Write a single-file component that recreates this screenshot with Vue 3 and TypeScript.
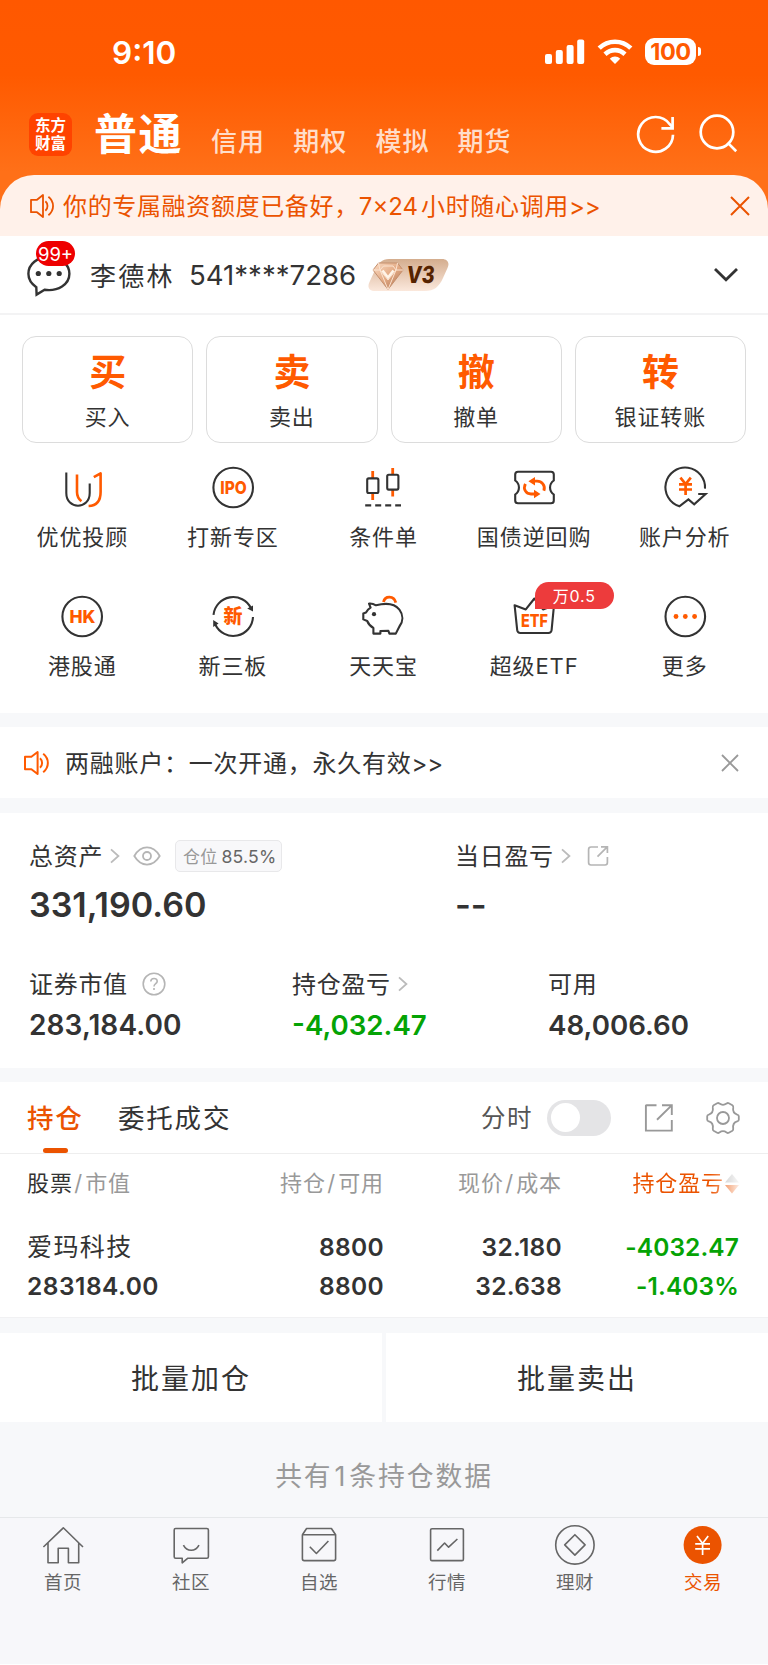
<script setup lang="ts">
interface Action { glyph: string; label: string }
interface Shortcut { icon: string; label: string; badge?: string }
interface NavItem { icon: string; label: string; active?: boolean }

const markets: string[] = ['信用', '期权', '模拟', '期货']

const actions: Action[] = [
  { glyph: '买', label: '买入' },
  { glyph: '卖', label: '卖出' },
  { glyph: '撤', label: '撤单' },
  { glyph: '转', label: '银证转账' },
]

const shortcuts: Shortcut[] = [
  { icon: 'advisor', label: '优优投顾' },
  { icon: 'ipo', label: '打新专区' },
  { icon: 'candles', label: '条件单' },
  { icon: 'bond', label: '国债逆回购' },
  { icon: 'analysis', label: '账户分析' },
  { icon: 'hk', label: '港股通' },
  { icon: 'board', label: '新三板' },
  { icon: 'piggy', label: '天天宝' },
  { icon: 'etf', label: '超级ETF', badge: '万0.5' },
  { icon: 'more', label: '更多' },
]

const navItems: NavItem[] = [
  { icon: 'home', label: '首页' },
  { icon: 'community', label: '社区' },
  { icon: 'watchlist', label: '自选' },
  { icon: 'quotes', label: '行情' },
  { icon: 'wealth', label: '理财' },
  { icon: 'trade', label: '交易', active: true },
]
</script>

<template>
  <div class="page">
    <header class="hero">
      <div class="status">
        <span class="time">9:10</span>
        <svg class="signal" width="40" height="26" viewBox="0 0 40 26" fill="#fff">
          <rect x="0" y="15" width="7" height="10" rx="2" />
          <rect x="10.8" y="11" width="7" height="14" rx="2" />
          <rect x="21.6" y="6" width="7" height="19" rx="2" />
          <rect x="32.2" y="0.5" width="7" height="24.5" rx="2" />
        </svg>
        <svg class="wifi" width="36" height="26" viewBox="0 0 36 26" fill="none" stroke="#fff" stroke-width="4.6">
          <path d="M2.2 9.2C11 0.6 25 0.6 33.8 9.2" />
          <path d="M8 15.2C13.8 9.8 22.2 9.8 28 15.2" />
          <path d="M12.8 19.8C15.8 16.8 20.2 16.8 23.2 19.8L18 25Z" fill="#fff" stroke="none" />
        </svg>
        <span class="battery">100</span>
        <span class="battery-tip"></span>
      </div>
      <div class="markets">
        <div class="logo">东方<br>财富</div>
        <h1>普通</h1>
        <nav class="market-tabs"><span v-for="m in markets" :key="m">{{ m }}</span></nav>
        <svg class="refresh" width="40" height="40" viewBox="0 0 40 40" fill="none" stroke="#fff" stroke-width="2.7">
          <path d="M37 20.7A17.4 17.4 0 1 1 33.7 10.2L36.4 13" />
          <path d="M36.6 3v11.3H25.4" />
        </svg>
        <svg class="search" width="40" height="40" viewBox="0 0 40 40" fill="none" stroke="#fff" stroke-width="2.7">
          <circle cx="18" cy="18" r="16.3" /><path d="M28.6 28.6l8.6 8.6" />
        </svg>
      </div>
    </header>

    <section class="promo">
      <svg width="26" height="26" viewBox="0 0 26 26" fill="none" stroke="#eb5300" stroke-width="1.8">
        <path d="M2 6.8h6L14 2v22l-6-4.8H2Z" stroke-linejoin="round" />
        <path d="M16.4 8.2c2.8 2.4 2.8 7.2 0 9.6M19.4 3.8c6.2 5 6.2 13.4 0 18.4" />
      </svg>
      <p>你的专属融资额度已备好，<span class="num">7×24</span>小时随心调用<span class="arrows">&gt;&gt;</span></p>
      <svg class="close" width="20" height="20" viewBox="0 0 20 20" fill="none" stroke="#eb5300" stroke-width="2">
        <path d="M1 1l18 18M19 1L1 19" />
      </svg>
    </section>

    <section class="account">
      <div class="chat">
        <svg width="44" height="44" viewBox="0 0 44 44" fill="none" stroke="#333" stroke-width="2.4">
          <path d="M9.3 34.2C4.4 30.8 1.4 26.2 1.4 20.8C1.4 11 10.4 4 21.8 4S42.4 11 42.4 20.8C42.4 31.6 31 38.6 17.6 36.8L9.6 41.6Z" />
          <g fill="#333" stroke="none"><circle cx="11.3" cy="20.5" r="2.6" /><circle cx="21.8" cy="20.5" r="2.6" /><circle cx="32.2" cy="20.5" r="2.6" /></g>
        </svg>
        <span class="unread">99+</span>
      </div>
      <span class="name">李德林</span>
      <span class="acct">541****7286</span>
      <svg class="vip" width="82" height="34" viewBox="0 0 82 34">
        <defs>
          <linearGradient id="vipBg" x1="0" y1="0" x2="0" y2="1"><stop offset="0" stop-color="#d4ad8e" /><stop offset="1" stop-color="#fbe8dc" /></linearGradient>
          <linearGradient id="gem" x1="0" y1="0" x2="1" y2="1"><stop offset="0" stop-color="#fbdcc4" /><stop offset=".5" stop-color="#e3aa84" /><stop offset="1" stop-color="#a96f50" /></linearGradient>
        </defs>
        <path d="M21 1H74C79.5 1 82 5 79.5 10L75 20C71 29 66 33 57 33H7C1 33-1 29 1.5 24L7 12C10 5 14 1 21 1Z" fill="url(#vipBg)" />
        <path d="M10.5 5H29.5L35 12L20 31.5L5 12Z" fill="url(#gem)" stroke="#c48f6d" stroke-width="1" />
        <path d="M5 12H12L15.5 8H25L28 12H35M12 12L20 22L28 12M10.5 5L12 12L20 31.5L28 12L29.5 5" fill="none" stroke="#fbe3d0" stroke-width="1" />
        <path d="M14.5 12.5L20 19.5L25.5 12.5" fill="none" stroke="#fff4e8" stroke-width="2.6" />
        <text transform="translate(38 25.3) skewX(-6)" x="0" y="0" font-family="Inter" font-size="23.5" font-weight="800" fill="#562300" textLength="28" lengthAdjust="spacingAndGlyphs">V3</text>
      </svg>
      <svg class="expand" width="26" height="16" viewBox="0 0 26 16" fill="none" stroke="#333" stroke-width="2.8"><path d="M2 2l11 10.8L24 2" /></svg>
    </section>

    <section class="actions">
      <button v-for="a in actions" :key="a.label" type="button"><b>{{ a.glyph }}</b><span>{{ a.label }}</span></button>
    </section>

    <section class="shortcuts">
      <div v-for="s in shortcuts" :key="s.label" class="shortcut">
        <svg width="48" height="48" viewBox="0 0 48 48" fill="none" stroke="#333" stroke-width="2.1">
          <template v-if="s.icon === 'advisor'">
            <path d="M8.3 9.5V30C8.3 47 31.7 47 31.7 30V20.5" />
            <path d="M19 11.5V29C19 33.5 20.6 36 23.4 38.2M35.8 14.2L42.6 10.4V29C42.6 38 38.5 42.7 30.6 43" stroke="#ff5a00" stroke-width="2.6" stroke-linejoin="round" />
          </template>
          <template v-else-if="s.icon === 'ipo'">
            <circle cx="24.2" cy="24.5" r="19.8" />
            <text class="word" x="11.3" y="30.9" font-size="17.6" textLength="26.5" lengthAdjust="spacingAndGlyphs">IPO</text>
          </template>
          <template v-else-if="s.icon === 'candles'">
            <path d="M13.7 8v7M13.7 30v7M33.7 5v7M33.7 26v7.5" stroke="#ff5a00" stroke-width="2.8" />
            <rect x="8.2" y="15.4" width="11.2" height="14.6" rx="1.5" /><rect x="28.2" y="11.8" width="11.2" height="14.8" rx="1.5" />
            <path d="M6.2 42.4H42" stroke-dasharray="6 4" />
          </template>
          <template v-else-if="s.icon === 'bond'">
            <path d="M8 8.8H41Q43.8 8.8 43.8 11.6V17.5C38.8 21 38.8 28 43.8 31.5V37.4Q43.8 40.2 41 40.2H8Q5.2 40.2 5.2 37.4V31.5C10.2 28 10.2 21 5.2 17.5V11.6Q5.2 8.8 8 8.8Z" />
            <path d="M22 18.2H27C31.5 18.2 35.8 22 33.9 27.8M15.4 20.8C12.8 26 16 31 21 31H26" stroke="#ff5a00" stroke-width="2.8" />
            <path d="M18.4 18.2L25 14V22.4ZM30.5 31L24 26.8V35.2Z" fill="#ff5a00" stroke="none" />
          </template>
          <template v-else-if="s.icon === 'analysis'">
            <path d="M44 25.6A19.8 19.8 0 1 0 18.4 43.3L27.4 36.4L33.2 41.4L44.6 31H37.2" />
            <path d="M19.4 14.6L24.6 21L29.8 14.6M18 21.4H31M18 26.5H31M24.6 21V32" stroke="#ff5a00" stroke-width="2.7" />
          </template>
          <template v-else-if="s.icon === 'hk'">
            <circle cx="24.2" cy="24.5" r="19.8" />
            <text class="word" x="11.4" y="31" font-size="17.6" textLength="26" lengthAdjust="spacingAndGlyphs">HK</text>
          </template>
          <template v-else-if="s.icon === 'board'">
            <path d="M4.5 22.8A19.8 19.8 0 0 1 42 16.2M44 25A19.8 19.8 0 0 1 6.4 32.8" />
            <path d="M38.2 16.6L44 13.6V19.6ZM4.2 35V28L9.6 31.6Z" fill="#333" stroke="none" />
            <text class="word" x="14.6" y="31.3" font-size="19">新</text>
          </template>
          <template v-else-if="s.icon === 'piggy'">
            <path d="M24.5 10C26 3.4 35 3.4 36.8 10.6" stroke="#ff5a00" stroke-width="2.8" />
            <path d="M10 11.6Q13.5 11.2 17 13.3C28 10.4 36 12 40.4 17.6C44.5 23 44.2 29.5 40.4 34.5L36.8 41.6H30.4L29.4 38.8L21.4 39V41.6H14.4V36C11 34 9.4 32 8.2 29L4.3 27.4V21.6L7 20.6C8.4 18 9.6 16.6 11.6 15.6Z" stroke-linejoin="round" />
            <circle cx="15" cy="22.2" r="2.1" fill="#333" stroke="none" />
          </template>
          <template v-else-if="s.icon === 'etf'">
            <path d="M4.6 13.2L15.8 17.4L24.4 6.5L33 17.4L44 13.2L41.6 38.2Q41.2 41 38.4 41H10.4Q7.6 41 7.2 38.2Z" stroke-linejoin="round" />
            <text class="word" x="11" y="35.2" font-size="18" textLength="27" lengthAdjust="spacingAndGlyphs">ETF</text>
          </template>
          <template v-else>
            <circle cx="24.3" cy="24.5" r="19.8" />
            <g fill="#ff5a00" stroke="none"><circle cx="15" cy="24.5" r="2.4" /><circle cx="24.3" cy="24.5" r="2.4" /><circle cx="33.6" cy="24.5" r="2.4" /></g>
          </template>
        </svg>
        <span class="caption">{{ s.label }}</span>
        <span v-if="s.badge" class="badge">{{ s.badge }}</span>
      </div>
    </section>

    <section class="notice">
      <svg width="27" height="26" viewBox="0 0 27 26" fill="none" stroke="#ff5a00" stroke-width="2">
        <path d="M2 6.8h6.4L14.6 2v22l-6.2-4.8H2Z" stroke-linejoin="round" />
        <path d="M17 8.2c2.8 2.4 2.8 7.2 0 9.6M20.2 3.8c6.2 5 6.2 13.4 0 18.4" />
      </svg>
      <p>两融账户：一次开通，永久有效<span class="arrows">&gt;&gt;</span></p>
      <svg class="close" width="18" height="18" viewBox="0 0 18 18" fill="none" stroke="#999" stroke-width="1.8">
        <path d="M1 1l16 16M17 1L1 17" />
      </svg>
    </section>

    <section class="assets">
      <div class="totals">
        <div>
          <div class="label">
            <span>总资产</span>
            <svg class="chev" width="10" height="16" viewBox="0 0 10 16"><path d="M1 1.4L8.4 8L1 14.6" /></svg>
            <svg class="eye" width="28" height="20" viewBox="0 0 28 20" fill="none" stroke="#b5b5b5" stroke-width="1.8">
              <path d="M1.3 10C8 -1.4 20 -1.4 26.7 10C20 21.4 8 21.4 1.3 10Z" /><circle cx="14" cy="10" r="4" />
            </svg>
            <span class="tag"><i>仓位</i>85.5%</span>
          </div>
          <strong>331,190.60</strong>
        </div>
        <div>
          <div class="label">
            <span>当日盈亏</span>
            <svg class="chev" width="10" height="16" viewBox="0 0 10 16"><path d="M1 1.4L8.4 8L1 14.6" /></svg>
            <svg class="share" width="22" height="22" viewBox="0 0 22 22" fill="none" stroke="#b5b5b5" stroke-width="1.7">
              <path d="M11 2H4Q1.6 2 1.6 4.4V17.6Q1.6 20 4 20H18Q20.4 20 20.4 17.6V12M14 1.9H20.4V8M20 2.2L10.5 11.7" />
            </svg>
          </div>
          <strong>--</strong>
        </div>
      </div>
      <div class="details">
        <div>
          <div class="label">
            <span>证券市值</span>
            <svg class="help" width="24" height="24" viewBox="0 0 24 24" fill="none" stroke="#b5b5b5" stroke-width="1.6">
              <circle cx="12" cy="12" r="10.8" />
              <path d="M8.8 9.6C8.8 5.4 15.4 5.6 15.2 9.4C15.1 11.6 12 11.8 12 14.4M12 16v2" />
            </svg>
          </div>
          <strong class="market-value">283,184.00</strong>
        </div>
        <div>
          <div class="label">
            <span>持仓盈亏</span>
            <svg class="chev" width="10" height="16" viewBox="0 0 10 16"><path d="M1 1.4L8.4 8L1 14.6" /></svg>
          </div>
          <strong class="down">-4,032.47</strong>
        </div>
        <div>
          <div class="label"><span>可用</span></div>
          <strong>48,006.60</strong>
        </div>
      </div>
    </section>

    <section class="tabs">
      <span class="tab active">持仓</span>
      <span class="tab">委托成交</span>
      <span class="minute">分时</span>
      <span class="toggle"></span>
      <svg class="open" width="30" height="30" viewBox="0 0 30 30" fill="none" stroke="#999" stroke-width="1.9">
        <path d="M12.5 2.3H2.5Q1.9 2.3 1.9 3V27.6H27.8V17M18 2.3H27.8V12M27.4 2.6L13 16.8" />
      </svg>
      <svg class="gear" width="34" height="34" viewBox="0 0 34 34" fill="none" stroke="#999" stroke-width="1.8" stroke-linejoin="round">
        <path d="M11.2 2.2Q12.4 1.6 13.4 2.6Q17 5.2 20.6 2.6Q21.6 1.6 22.8 2.2L26.4 4.2Q27.4 4.8 27.2 6.4C26.6 10.4 28.4 12.8 31.2 13.6Q32.8 14 32.8 15.2V18.8Q32.8 20 31.2 20.4C28.4 21.2 26.6 23.6 27.2 27.6Q27.4 29.2 26.4 29.8L22.8 31.8Q21.6 32.4 20.6 31.4Q17 28.8 13.4 31.4Q12.4 32.4 11.2 31.8L7.6 29.8Q6.6 29.2 6.8 27.6C7.4 23.6 5.6 21.2 2.8 20.4Q1.2 20 1.2 18.8V15.2Q1.2 14 2.8 13.6C5.6 12.8 7.4 10.4 6.8 6.4Q6.6 4.8 7.6 4.2Z" />
        <circle cx="17" cy="17" r="6" />
      </svg>
    </section>

    <section class="holdings">
      <div class="grid head">
        <span><em>股票</em><i>/</i>市值</span>
        <span>持仓<i>/</i>可用</span>
        <span>现价<i>/</i>成本</span>
        <span class="sort">持仓盈亏<svg width="14" height="20" viewBox="0 0 14 20"><path d="M7 0L14 8.4H0Z" fill="#b8b8b8" /><path d="M7 19.6L14 11H0Z" fill="#eb5300" /></svg></span>
      </div>
      <div class="grid row">
        <span class="stock">爱玛科技</span><b>8800</b><b>32.180</b><b class="down">-4032.47</b>
      </div>
      <div class="grid row">
        <b>283184.00</b><b>8800</b><b>32.638</b><b class="down">-1.403%</b>
      </div>
    </section>

    <section class="batch">
      <button type="button">批量加仓</button>
      <button type="button">批量卖出</button>
    </section>

    <p class="summary">共有<span>1</span>条持仓数据</p>

    <footer class="nav">
      <div v-for="n in navItems" :key="n.label" class="nav-item" :class="{ active: n.active }">
        <svg width="44" height="44" viewBox="0 0 44 44" fill="none" stroke="#666" stroke-width="1.6" stroke-linejoin="round">
          <path v-if="n.icon === 'home'" d="M2.4 24L22.3 4.8L42 24M7 20V39.8H17.2V25.3H27.4V39.8H37.7V20" />
          <path v-else-if="n.icon === 'community'" d="M6.6 5.5H37.8Q39.4 5.5 39.4 7.1V33.7Q39.4 35.3 37.8 35.3H18.6L13.2 39.8V35.3H6.6Q5.2 35.3 5.2 33.7V7.1Q5.2 5.5 6.6 5.5ZM14.4 22.2C18 29 26.4 29 30 22.2" />
          <path v-else-if="n.icon === 'watchlist'" d="M5.4 11.8L9.6 5.5H34.4L38.6 11.8V35.8Q38.6 37.6 36.8 37.6H7.2Q5.4 37.6 5.4 35.8V11.8H38.6M12.8 23.8L19.4 30.5L31.4 18" />
          <path v-else-if="n.icon === 'quotes'" d="M7 5.7H37Q38.4 5.7 38.4 7.1V36.2Q38.4 37.6 37 37.6H7Q5.6 37.6 5.6 36.2V7.1Q5.6 5.7 7 5.7ZM12.3 27.6L19.6 20L23.6 24.2L32.4 16" />
          <template v-else-if="n.icon === 'wealth'"><circle cx="21.9" cy="21.9" r="19.2" /><path d="M21.9 11.7L32.1 21.9L21.9 32.1L11.7 21.9Z" /></template>
          <template v-else><circle cx="21.6" cy="22" r="19" fill="#eb5300" stroke="none" /><path d="M16 13L21.6 20.6L27.2 13M14.2 20.8H29M14.2 25.8H29M21.6 20.6V32" stroke="#fff" stroke-width="1.7" /></template>
        </svg>
        <span>{{ n.label }}</span>
      </div>
    </footer>
  </div>
</template>

<style>
html, body { margin: 0; background: #fff; }
</style>

<style scoped>
.page {
  width: 768px;
  height: 1664px;
  display: flex;
  flex-direction: column;
  background: #f7f8fa;
  color: #333;
  font-family: Inter, "Noto Sans CJK SC", sans-serif;
  overflow: hidden;
}
.page * { box-sizing: border-box; }
p, h1 { margin: 0; }
svg { display: block; flex: none; }
section, .summary, .nav, .hero { flex: none; white-space: nowrap; }
button { appearance: none; border: 0; padding: 0; background: #fff; color: inherit; font: inherit; }

.hero {
  height: 220px;
  margin-bottom: -45px;
  background: linear-gradient(#ff5800 0, #ff5a00 75px, #ff7018 172px, #ff7018 100%);
  color: #fff;
}
.status { display: flex; align-items: center; height: 103px; padding-left: 112px; }
.time { width: 433px; font-size: 31.5px; font-weight: 600; line-height: 40px; padding-top: 2px; }
.wifi { margin-left: 12px; }
.battery {
  width: 51px; height: 27px; margin-left: 12px;
  border-radius: 9px; background: #fff; color: #ff5a00;
  font-size: 23.5px; font-weight: 700; line-height: 27px; text-align: center; letter-spacing: -0.4px;
}
.battery-tip { width: 3px; height: 9px; margin-left: 2px; border-radius: 0 5px 5px 0; background: #fff; }
.markets { display: flex; height: 64px; padding: 10px 0 0 29px; }
.logo {
  width: 43px; height: 43px; padding-top: 3px; border-radius: 9px; background: #ff4300; text-align: center;
  font-family: "Noto Sans CJK SC", sans-serif; font-size: 15.5px; font-weight: 700; line-height: 17.8px;
}
h1 { width: 115px; margin-left: 22px; font-size: 43px; font-weight: 600; letter-spacing: 1.4px; line-height: 42px; }
.market-tabs { display: flex; gap: 28.2px; width: 427px; padding-left: 2px; color: rgba(255, 255, 255, .8); font-size: 26px; font-weight: 500; letter-spacing: 1px; line-height: 57px; }
.refresh { margin-top: 1px; }
.search { margin: 1px 0 0 23px; }

.promo {
  display: flex; align-items: center; height: 61px; padding: 0 18px 0 29px;
  background: #fff1ea; border-radius: 34px 34px 0 0; color: #eb5300;
}
.promo p { flex: 1; margin-left: 8px; padding-bottom: 2px; font-size: 24px; letter-spacing: .65px; }
.num { margin-right: 3px; letter-spacing: 0; }
.arrows { letter-spacing: -.2px; }

.account { display: flex; align-items: center; height: 79px; padding: 0 29px 0 27px; background: #fff; border-bottom: 2px solid #f3f3f4; }
.chat { position: relative; width: 44px; height: 44px; }
.unread {
  position: absolute; left: 9px; top: -12px; width: 39px; height: 25px; border-radius: 13px;
  background: #e00; color: #fff; font-size: 18.5px; line-height: 26px; text-align: center;
}
.name { width: 99px; margin-left: 19px; padding-bottom: 1px; font-size: 26px; letter-spacing: 2.2px; }
.acct { width: 179px; font-size: 27.6px; }
.vip { flex: none; }
.expand { margin-left: auto; }

.actions { display: grid; grid-template-columns: repeat(4, 1fr); gap: 13px; height: 128px; padding: 21px 22px 0; background: #fff; }
.actions button { height: 107px; border: 1px solid #dcdcdc; border-radius: 14px; display: flex; flex-direction: column; align-items: center; }
.actions b { margin-top: 10px; color: #ff5a00; font-size: 37px; font-weight: 700; line-height: 52px; }
.actions span { margin-top: 1px; font-size: 22px; letter-spacing: .9px; line-height: 34px; }

.shortcuts { display: grid; grid-template-columns: repeat(5, 1fr); grid-auto-rows: 129px; height: 270px; padding: 20px 8px 0 7px; background: #fff; }
.shortcut { position: relative; display: flex; flex-direction: column; align-items: center; }
.caption { margin-top: 8.5px; font-size: 22px; letter-spacing: .9px; line-height: 34px; }
.word { fill: #ff5a00; stroke: none; font-family: Inter, "Noto Sans CJK SC", sans-serif; font-weight: 800; }
.badge {
  position: absolute; left: 76px; top: -10px; width: 79px; height: 27px; border-radius: 14px 14px 14px 0;
  background: #ed3b3c; color: #fff; font-size: 16px; letter-spacing: .8px; line-height: 28px; text-align: center;
}

.notice { display: flex; align-items: center; height: 71px; margin-top: 14px; padding: 0 29px 0 23px; background: #fff; }
.notice p { flex: 1; margin-left: 15px; padding-bottom: 2px; font-size: 24px; letter-spacing: .75px; }

.assets { height: 255px; margin-top: 15px; padding: 26px 0 0 29px; background: #fff; }
.totals { display: grid; grid-template-columns: 426px 1fr; height: 128px; }
.details { display: grid; grid-template-columns: 263px 256px 1fr; }
.label { display: flex; align-items: center; height: 34px; font-size: 24px; letter-spacing: .7px; }
.label > span:first-child { padding-bottom: 3px; }
.chev { margin-left: 7px; fill: none; stroke: #bbb; stroke-width: 1.8; }
.eye { margin-left: 13px; }
.tag {
  display: flex; width: 107px; height: 32px; margin-left: 14px; padding-left: 7px; border: 1px solid #e8e8ea; border-radius: 5px;
  background: #f8f8fa; color: #666; font-size: 17.6px; letter-spacing: .2px; line-height: 32px;
}
.tag i { margin-right: 4px; color: #999; font-style: normal; font-size: 17px; letter-spacing: .2px; }
.share { margin-left: 16px; }
.help { margin-left: 14px; }
.totals strong { display: block; margin-top: 10px; font-size: 34.1px; font-weight: 600; line-height: 44px; }
.details strong { display: block; margin-top: 5px; font-size: 27.7px; font-weight: 600; line-height: 38px; }
.details .market-value { font-size: 28px; letter-spacing: .1px; }
.down { color: #05a305; }

.tabs { display: flex; align-items: center; height: 72px; margin-top: 14px; padding-left: 27px; background: #fff; border-bottom: 1px solid #eee; }
.tab { position: relative; padding-top: 2px; font-size: 26.5px; letter-spacing: 1.8px; line-height: 69px; }
.tab.active { width: 91px; color: #eb5300; font-weight: 500; }
.tab.active::after { content: ""; position: absolute; left: 16px; bottom: 0; width: 25px; height: 5px; border-radius: 3px; background: #eb5300; }
.minute { width: 66px; margin-left: auto; padding-bottom: 2px; color: #555; font-size: 24.5px; letter-spacing: 1.6px; }
.toggle { width: 64px; height: 36px; padding: 3.5px; border-radius: 18px; background: #e4e4e6; }
.toggle::after { content: ""; display: block; width: 29px; height: 29px; border-radius: 50%; background: #fff; }
.open { margin-left: 33px; }
.gear { margin: 0 28px 0 32px; }

.holdings { height: 164px; padding-top: 8px; background: #fff; border-bottom: 1px solid #f1f1f3; }
.grid { display: grid; grid-template-columns: 175px 182px 178px 177px; padding-left: 27px; }
.grid > * { text-align: right; }
.grid > :first-child { text-align: left; }
.head { height: 66px; color: #999; font-size: 22px; letter-spacing: .9px; line-height: 43px; }
.head em { color: #333; font-style: normal; }
.head i { margin: 0 2px 0 1.5px; font-style: normal; }
.sort { display: flex; justify-content: flex-end; align-items: center; height: 43px; color: #eb5300; mask-image: linear-gradient(90deg, #000 148px, rgba(0, 0, 0, .15) 176px); }
.sort svg { margin-left: 1px; }
.row { height: 39px; font-size: 25px; line-height: 38px; }
.row b { font-weight: 600; font-size: 24.5px; letter-spacing: .3px; }
.row b:first-child { letter-spacing: .5px; }
.row .down { letter-spacing: .1px; }
.stock { letter-spacing: 1.4px; }

.batch { display: grid; grid-template-columns: 382px 382px; gap: 4px; height: 89px; margin-top: 15px; }
.batch button { padding-bottom: 2px; font-size: 28px; letter-spacing: 2px; }
.summary { height: 95px; color: #999; font-size: 26.8px; letter-spacing: 1.9px; line-height: 109px; text-align: center; }
.summary span { margin: 0 2px; }

.nav { display: grid; grid-template-columns: repeat(6, 128px); flex: 1; margin-left: -1px; padding-top: 5px; background: #f7f7fa; border-top: 1px solid #e6e8ea; }
.nav-item { display: flex; flex-direction: column; align-items: center; color: #666; font-size: 18.5px; letter-spacing: .5px; line-height: 30px; }
.nav-item.active { color: #eb5300; }
</style>
